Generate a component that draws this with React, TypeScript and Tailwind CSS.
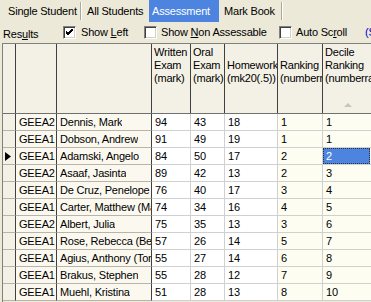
import React from "react";

const rows: string[][] = [
  ["GEEA2", "Dennis, Mark", "94", "43", "18", "1", "1"],
  ["GEEA1", "Dobson, Andrew", "91", "49", "19", "1", "1"],
  ["GEEA1", "Adamski, Angelo", "84", "50", "17", "2", "2"],
  ["GEEA2", "Asaaf, Jasinta", "89", "42", "13", "2", "3"],
  ["GEEA1", "De Cruz, Penelope", "76", "40", "17", "3", "4"],
  ["GEEA1", "Carter, Matthew (Matt)", "74", "34", "16", "4", "5"],
  ["GEEA2", "Albert, Julia", "75", "35", "13", "3", "6"],
  ["GEEA1", "Rose, Rebecca (Becky)", "57", "26", "14", "5", "7"],
  ["GEEA1", "Agius, Anthony (Tony)", "55", "27", "14", "6", "8"],
  ["GEEA1", "Brakus, Stephen", "55", "28", "12", "7", "9"],
  ["GEEA1", "Muehl, Kristina", "51", "28", "13", "8", "10"],
];

function Check({ checked }: { checked?: boolean }) {
  return (
    <div className="w-[13px] h-[13px] shrink-0 bg-white border border-t-[#808080] border-l-[#808080] border-b-white border-r-white shadow-[inset_1px_1px_0_#404040,inset_-1px_-1px_0_#d4d0c8] flex items-center justify-center">
      {checked && (
        <svg width="7" height="7" viewBox="0 0 7 7">
          <path d="M0 2 L2 4 L7 -1 M0 3 L2 5 L7 0 M0 4 L2 6 L7 1" stroke="#000" strokeWidth="1" fill="none" />
        </svg>
      )}
    </div>
  );
}

function Sep() {
  return <div className="w-[2px] shrink-0 my-[2px] border-l border-[#aca899] border-r border-r-white" />;
}

export default function App() {
  return (
    <div className="w-[371px] h-[302px] overflow-hidden bg-[#ECE9D8] text-[11px] tracking-[-0.2px] text-black font-['Liberation_Sans',Arial,sans-serif] leading-none flex flex-col">
      {/* Tabs */}
      <div className="flex h-[22px] shrink-0 items-stretch whitespace-nowrap">
        <div className="w-[80px] shrink-0 pl-[8px] pt-[1px] flex items-center">Single Student</div>
        <Sep />
        <div className="w-[67px] shrink-0 pl-[5px] pt-[1px] flex items-center">All Students</div>
        <div className="w-[70px] shrink-0 pl-[3px] pt-[1px] flex items-center bg-[#4C84E0] text-white">Assessment</div>
        <div className="w-[62px] shrink-0 pl-[5px] pt-[1px] flex items-center">Mark Book</div>
        <Sep />
      </div>
      {/* Options row */}
      <div className="flex h-[21px] shrink-0 items-center whitespace-nowrap">
        <div className="w-[63px] shrink-0 pl-[3px] pt-[3px]">
          Res<u>u</u>lts
        </div>
        <div className="w-[81px] shrink-0 flex items-center gap-[5px]">
          <Check checked />
          <span>
            Show <u>L</u>eft
          </span>
        </div>
        <div className="w-[135px] shrink-0 flex items-center gap-[4px]">
          <Check />
          <span>
            Show <u>N</u>on Assessable
          </span>
        </div>
        <div className="w-[86px] shrink-0 flex items-center gap-[4px]">
          <Check />
          <span>
            Auto Sc<u>r</u>oll
          </span>
        </div>
        <span className="text-[#0000C0] shrink-0">(Show</span>
      </div>
      {/* Grid */}
      <div className="ml-[2px] flex-1 border-l border-t border-[#808080] overflow-hidden">
        {/* Header */}
        <div className="flex h-[70px] border-b border-[#707070] bg-[#F3F1E6] w-[420px]">
          <div className="w-[13px] shrink-0 border-r border-[#404040]" />
          <div className="w-[41px] shrink-0 border-r border-[#404040]" />
          <div className="w-[95px] shrink-0 border-r border-[#404040]" />
          {[
            ["Written", "Exam", "(mark)", 39],
            ["Oral", "Exam", "(mark)", 34],
            ["", "Homework", "(mk20(.5))", 53],
            ["", "Ranking", "(numberrank)", 45],
          ].map(([a, b, c, w], i) => (
            <div
              key={i}
              className={`shrink-0 border-r border-[#404040] pl-[2px] pt-[2px] overflow-hidden whitespace-nowrap leading-[13px] ${
                w === 39 ? "w-[39px]" : w === 34 ? "w-[34px]" : w === 53 ? "w-[53px]" : "w-[45px]"
              }`}
            >
              <div className="h-[13px]">{a}</div>
              <div className="h-[13px]">{b}</div>
              <div className="h-[13px]">{c}</div>
            </div>
          ))}
          <div className="w-[60px] shrink-0 pl-[2px] pt-[2px] overflow-hidden whitespace-nowrap leading-[13px] flex flex-col">
            <div className="h-[13px]">Decile</div>
            <div className="h-[13px]">Ranking</div>
            <div className="h-[13px]">(numberrank)</div>
            <div className="mt-auto mb-[6px] ml-[19px]">
              <svg width="8" height="4" viewBox="0 0 8 4">
                <polygon points="4,0 8,4 0,4" fill="#C8C6BC" />
              </svg>
            </div>
          </div>
        </div>
        {/* Rows */}
        {rows.map((r, i) => {
          const current = i === 2;
          return (
            <div key={i} className="flex h-[17px] w-[420px] whitespace-nowrap">
              <div className="w-[13px] shrink-0 border-r border-[#404040] border-b border-b-[#B8B5A8] bg-[#F3F1E6] flex items-center pl-[2px]">
                {current && (
                  <svg width="6" height="9" viewBox="0 0 6 9">
                    <polygon points="0,0 6,4.5 0,9" fill="#000" />
                  </svg>
                )}
              </div>
              <div className="w-[41px] shrink-0 border-r border-[#404040] border-b border-b-[#B8B5A8] bg-[#FBF9EF] pl-[3px] flex items-center">
                {r[0]}
              </div>
              <div className="w-[95px] shrink-0 border-r border-[#404040] border-b border-b-[#B8B5A8] bg-[#FBF9EF] pl-[3px] flex items-center overflow-hidden">
                <span className="overflow-hidden">{r[1]}</span>
              </div>
              <div className="w-[39px] shrink-0 border-r border-b border-[#D0D0D0] bg-white pl-[3px] flex items-center">
                {r[2]}
              </div>
              <div className="w-[34px] shrink-0 border-r border-b border-[#D0D0D0] bg-white pl-[3px] flex items-center">
                {r[3]}
              </div>
              <div className="w-[53px] shrink-0 border-r border-b border-[#D0D0D0] bg-white pl-[3px] flex items-center">
                {r[4]}
              </div>
              <div className="w-[45px] shrink-0 border-r border-b border-[#D0D0D0] bg-[#FDFDF2] pl-[3px] flex items-center">
                {r[5]}
              </div>
              <div className="w-[60px] shrink-0 border-r border-b border-[#D0D0D0] bg-[#FDFDF2] flex items-stretch">
                {current ? (
                  <div className="flex-1 mr-[12px] bg-[#4C84E0] text-white outline-1 outline-dotted outline-[#303030] -outline-offset-1 pl-[3px] flex items-center">
                    {r[6]}
                  </div>
                ) : (
                  <div className="pl-[3px] flex items-center">{r[6]}</div>
                )}
              </div>
            </div>
          );
        })}
      </div>
    </div>
  );
}
